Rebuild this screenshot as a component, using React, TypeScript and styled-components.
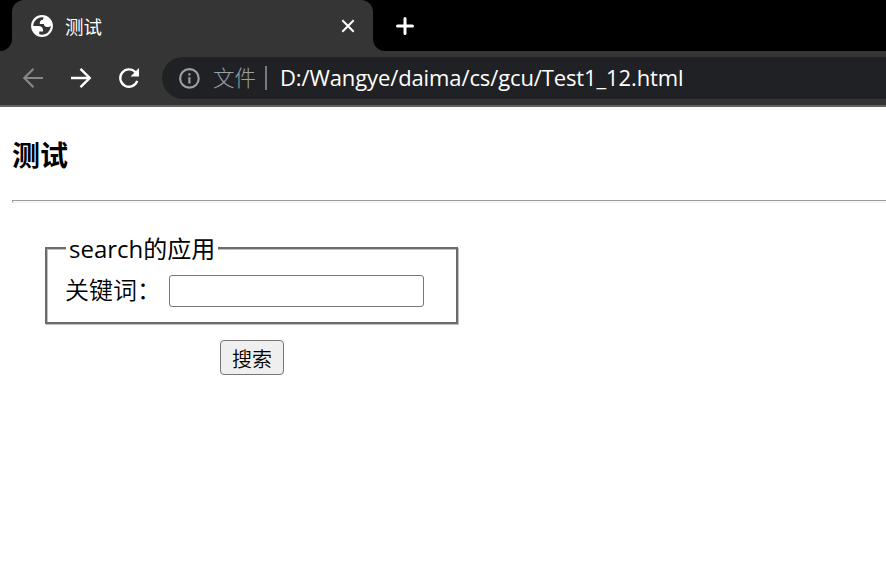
import React from "react";
import styled, { createGlobalStyle } from "styled-components";

const GlobalStyle = createGlobalStyle`
  * { box-sizing: border-box; }
  html, body { margin: 0; padding: 0; background: #fff; overflow: hidden; }
  body { font-family: "Open Sans", "Noto Sans CJK SC", sans-serif; color: #000; }
`;

const Window = styled.div`
  width: 100%;
  height: 583px;
  overflow: hidden;
`;

const TabStrip = styled.div`
  display: flex;
  height: 51px;
  background: #000;
`;

const TabFoot = styled.svg`
  flex: none;
  align-self: flex-end;
  width: 12px;
  height: 12px;
  fill: #353535;
`;

const Tab = styled.div`
  display: flex;
  align-items: center;
  flex: none;
  width: 361px;
  height: 51px;
  padding: 0 17px 0 18px;
  border-radius: 12px 12px 0 0;
  background: #353535;
  color: #fff;
`;

const TabTitle = styled.span`
  flex: 1;
  margin-left: 11px;
  font: 18.5px/24px "Noto Sans CJK SC", sans-serif;
`;

const Icon = styled.svg<{ $size: number }>`
  display: block;
  flex: none;
  width: ${(p) => p.$size}px;
  height: ${(p) => p.$size}px;
`;

const NewTab = styled.div`
  display: flex;
  align-items: center;
  margin-left: 10px;
`;

const Toolbar = styled.div`
  display: flex;
  align-items: center;
  height: 56px;
  padding-left: 21px;
  border-bottom: 2px solid #636161;
  background: #353535;
`;

const NavButtons = styled.div`
  display: flex;
  gap: 24px;
  width: 141px;
`;

const AddressBar = styled.div`
  display: flex;
  align-items: center;
  flex: 1;
  height: 42px;
  padding-left: 15px;
  border-radius: 21px 0 0 21px;
  background: #202124;
`;

const Scheme = styled.span`
  margin-left: 12px;
  padding-bottom: 2px;
  color: #9aa0a6;
  font: 300 21.5px/30px "Noto Sans CJK SC", sans-serif;
`;

const Divider = styled.span`
  width: 2px;
  height: 24px;
  margin: 0 13px 0 9px;
  background: #77797c;
`;

const Address = styled.span`
  padding-bottom: 2px;
  color: #fff;
  font-size: 22px;
  line-height: 30px;
  letter-spacing: -0.11px;
  white-space: nowrap;
`;

const Page = styled.main`
  padding: 29px 0 0 12px;
`;

const Heading = styled.h3`
  height: 36px;
  margin: 0;
  font: 700 28px/36px "Noto Sans CJK SC", sans-serif;
`;

const Rule = styled.div`
  height: 3px;
  margin-top: 28px;
  border-top: 1px solid #9a9a9a;
  border-bottom: 1px solid #eee;
  border-left: 1px solid #9a9a9a;
`;

const SearchForm = styled.form`
  display: flex;
  flex-direction: column;
  width: 413px;
  margin: 29px 0 0 33px;
`;

const Group = styled.fieldset`
  height: 92px;
  margin: 0;
  padding: 0 0 0 19px;
  border: 2px solid #6c6c6c;
  box-shadow: 1px 1px 0 #c0c0c0, inset 1px 1px 0 #c0c0c0;
`;

const Legend = styled.legend`
  height: 32px;
  padding: 0 3px;
  background: #fff;
  font-size: 24px;
  line-height: 34px;
`;

const Field = styled.label`
  display: flex;
  align-items: center;
  height: 54px;
  margin-left: -1px;
  font-size: 24px;
  line-height: 32px;
`;

const FieldName = styled.span`
  width: 104px;
  padding-bottom: 4px;
  font-family: "Noto Sans CJK SC", sans-serif;
  font-weight: 350;
  white-space: nowrap;
`;

const SearchInput = styled.input`
  width: 255px;
  height: 32px;
  border: 1px solid #767676;
  border-radius: 3px;
  background: #fff;
  outline: 0;
`;

const Submit = styled.button`
  width: 64px;
  height: 35px;
  margin: 16px 0 0 175px;
  padding: 2px 0 0;
  border: 1px solid #767676;
  border-radius: 4px;
  background: #efefef;
  color: #000;
  font: 350 20px/30px "Noto Sans CJK SC", sans-serif;
`;

export default function App() {
  return (
    <Window>
      <GlobalStyle />
      <TabStrip>
        <TabFoot viewBox="0 0 12 12"><path d="M12 0A12 12 0 0 1 0 12H12Z" /></TabFoot>
        <Tab>
          <Icon $size={24} viewBox="1 1 22 22">
            <circle cx="12" cy="12" r="10" fill="#fff" />
            <path
              d="M4 12h4.4c3.407.022 4.922 1.73 4.543 5.127H9.488v2.47a8.004 8.004 0 0 0 10.498-8.083C19.327 12.504 18.332 13 17 13c-2.137 0-3.206-.916-3.206-2.75h-3.748c-.274-2.728.683-4.092 2.87-4.092 0-.975.327-1.597.811-1.97A8.004 8.004 0 0 0 4 12z"
              fill="#353535"
            />
          </Icon>
          <TabTitle>测试</TabTitle>
          <Icon $size={16} viewBox="0 0 16 16" fill="none" stroke="#fff" strokeWidth="2">
            <path d="M2.3 2.3 13.7 13.7M13.7 2.3 2.3 13.7" />
          </Icon>
        </Tab>
        <TabFoot viewBox="0 0 12 12"><path d="M0 0A12 12 0 0 0 12 12H0Z" /></TabFoot>
        <NewTab>
          <Icon $size={20} viewBox="0 0 20 20" fill="none" stroke="#fff" strokeWidth="3" strokeLinecap="round">
            <path d="M10 2.5V17.5M2.5 10H17.5" />
          </Icon>
        </NewTab>
      </TabStrip>
      <Toolbar>
        <NavButtons>
          <Icon $size={24} viewBox="0 0 24 24" fill="none" stroke="#888" strokeWidth="2.1">
            <path d="M22 12H3.5M12.5 2.8 3.3 12 12.5 21.2" />
          </Icon>
          <Icon $size={24} viewBox="0 0 24 24" fill="none" stroke="#fff" strokeWidth="2.4">
            <path d="M2 12H20.5M11.5 2.8 20.7 12 11.5 21.2" />
          </Icon>
          <Icon $size={24} viewBox="0 0 24 24">
            <path d="M18.4 6.2A8.7 8.7 0 1 0 20.2 14.8" fill="none" stroke="#fff" strokeWidth="2.3" />
            <path d="M22 2V10.5H13.5Z" fill="#fff" />
          </Icon>
        </NavButtons>
        <AddressBar>
          <Icon $size={24} viewBox="0 0 24 24" fill="none" stroke="#9aa0a6" strokeWidth="2.2">
            <circle cx="12.4" cy="12.4" r="9.3" />
            <path d="M12.4 7.2V9.4M12.4 11.2V17.4" />
          </Icon>
          <Scheme>文件</Scheme>
          <Divider />
          <Address>D:/Wangye/daima/cs/gcu/Test1_12.html</Address>
        </AddressBar>
      </Toolbar>
      <Page>
        <Heading>测试</Heading>
        <Rule />
        <SearchForm onSubmit={(e) => e.preventDefault()}>
          <Group>
            <Legend>search的应用</Legend>
            <Field>
              <FieldName>关键词：</FieldName>
              <SearchInput type="text" />
            </Field>
          </Group>
          <Submit>搜索</Submit>
        </SearchForm>
      </Page>
    </Window>
  );
}
